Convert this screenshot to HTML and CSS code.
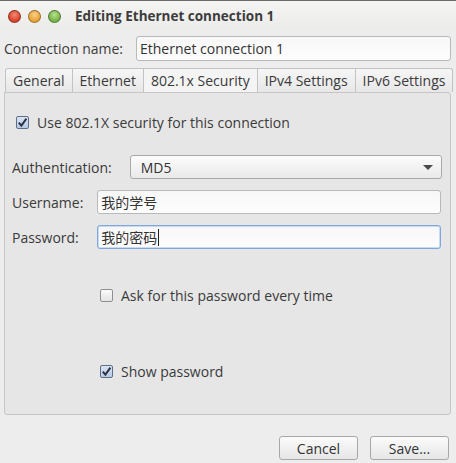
FILE: index.html
```html
<!DOCTYPE html>
<html>
<head>
<meta charset="utf-8">
<link rel="stylesheet" href="styles.css">
</head>
<body>
<div class="window">
  <div class="titlebar">
    <div class="wbtns">
      <span class="wbtn close"></span>
      <span class="wbtn min"></span>
      <span class="wbtn max"></span>
    </div>
    <div class="title">Editing Ethernet connection 1</div>
  </div>
  <div class="content">
    <div class="name-row">
      <span class="lbl">Connection name:</span>
      <div class="entry name-entry">Ethernet connection 1</div>
    </div>
    <div class="notebook">
      <div class="tabs">
        <div class="tab">General</div>
        <div class="tab">Ethernet</div>
        <div class="tab active">802.1x Security</div>
        <div class="tab">IPv4 Settings</div>
        <div class="tab">IPv6 Settings</div>
      </div>
      <div class="page">
        <label class="check use-check"><span class="cb checked"><svg viewBox="0 0 13 13" width="13" height="13"><path d="M2.8 6.6 L5.4 9.6 L10.4 2.6" fill="none" stroke="#2b3340" stroke-width="2"/></svg></span>Use 802.1X security for this connection</label>
        <div class="auth-row">
          <span class="lbl">Authentication:</span>
          <div class="combo"><span>MD5</span><span class="arrow"></span></div>
        </div>
        <div class="form">
          <span class="lbl">Username:</span>
          <div class="entry cjk">我的学号</div>
          <span class="lbl">Password:</span>
          <div class="entry cjk focus">我的密码<span class="caret"></span></div>
        </div>
        <label class="check ask-check"><span class="cb"></span>Ask for this password every time</label>
        <label class="check show-check"><span class="cb checked"><svg viewBox="0 0 13 13" width="13" height="13"><path d="M2.8 6.6 L5.4 9.6 L10.4 2.6" fill="none" stroke="#2b3340" stroke-width="2"/></svg></span>Show password</label>
      </div>
    </div>
    <div class="actions">
      <button class="btn">Cancel</button>
      <button class="btn">Save...</button>
    </div>
  </div>
</div>
</body>
</html>
```
FILE: styles.css
```css
* { box-sizing: border-box; }
html, body { margin: 0; padding: 0; }
body {
  width: 456px;
  height: 463px;
  overflow: hidden;
  background: #ededed;
  font-family: "Open Sans", "Noto Sans CJK SC", sans-serif;
  font-size: 14px;
  color: #3a3a3a;
}
.window { width: 456px; height: 463px; display: flex; flex-direction: column; }
.titlebar {
  height: 31px;
  border-top: 1px solid #6b6a66;
  background: linear-gradient(#f4f4f3, #ebebea);
  display: flex;
  align-items: center;
  padding-left: 8px;
}
.wbtns { display: flex; gap: 7px; }
.wbtn {
  width: 13px; height: 13px; border-radius: 50%;
  border: 1px solid rgba(0,0,0,0.35);
}
.wbtn.close { background: radial-gradient(circle at 50% 35%, #f28a72, #d9402a 70%); }
.wbtn.min { background: radial-gradient(circle at 50% 35%, #fbd08a, #e8a033 70%); }
.wbtn.max { background: radial-gradient(circle at 50% 35%, #b8e08e, #72b244 70%); }
.title {
  margin-left: 14px;
  font-weight: bold;
  font-size: 13.5px;
  color: #3c3c3c;
}
.content { flex: 1; padding: 5px 5px 0 4px; display: flex; flex-direction: column; }
.name-row { display: flex; align-items: center; gap: 13px; height: 25px; }
.entry {
  height: 24px;
  border: 1px solid #b9b9b9;
  border-radius: 3px;
  background: linear-gradient(#f7f7f7, #fdfdfd);
  padding: 0 3px;
  display: flex; align-items: center;
  color: #333;
}
.name-entry { flex: 1; height: 25px; }
.notebook { margin-top: 7px; display: flex; flex-direction: column; }
.tabs { display: flex; padding-left: 1px; height: 24px; }
.tab {
  flex: none;
  white-space: nowrap;
  padding: 0 7px;
  border: 1px solid #c3c3c3;
  border-left: none;
  border-bottom: none;
  background: linear-gradient(#f6f6f6, #e7e7e7);
  display: flex; align-items: center;
  color: #3a3a3a;
}
.tab:first-child { border-left: 1px solid #c3c3c3; border-top-left-radius: 3px; }
.tab:last-child { border-top-right-radius: 3px; }
.tab.active { background: #f4f4f4; }
.page {
  height: 323px;
  border: 1px solid #c6c6c6;
  border-radius: 0 3px 3px 3px;
  background: #e6e6e6;
  padding: 21px 8px 0 7px;
  display: flex; flex-direction: column;
}
.check { display: flex; align-items: center; gap: 8px; }
.cb {
  width: 13px; height: 13px;
  border: 1px solid #8f8f8f;
  border-radius: 2px;
  background: linear-gradient(#fbfbfb, #e3e3e3);
  display: flex; align-items: center; justify-content: center;
  position: relative;
  flex: none;
}
.cb.checked { background: linear-gradient(#dbe5f4, #b7c9e6); border-color: #5e6f8a; }
.cb svg { position: absolute; left: -1px; top: -1px; }
.use-check { margin-left: 4px; height: 16px; }
.auth-row { display: flex; align-items: center; margin-top: 25px; gap: 18px; }
.combo {
  flex: 1; height: 24px;
  border: 1px solid #a9a9a9; border-radius: 3px;
  background: linear-gradient(#fcfcfc, #e9e9e9);
  display: flex; align-items: center; justify-content: space-between;
  padding: 0 8px 0 10px;
  color: #333;
}
.arrow {
  width: 0; height: 0;
  border-left: 5px solid transparent;
  border-right: 5px solid transparent;
  border-top: 5px solid #4a4a4a;
}
.form {
  margin-top: 11px;
  display: grid;
  grid-template-columns: auto 1fr;
  column-gap: 14px;
  row-gap: 11px;
  align-items: center;
  padding-right: 1px;
}
.cjk { font-family: "Noto Sans CJK SC", sans-serif; font-size: 14px; }
.entry.focus { border-color: #7fa7da; box-shadow: inset 0 0 0 1px #c8dbf3; }
.caret { width: 1px; height: 17px; background: #222; margin-left: 1px; }
.ask-check { margin-left: 88px; margin-top: 38px; height: 16px; }
.show-check { margin-left: 88px; margin-top: 60px; height: 16px; }
.actions {
  display: flex; justify-content: flex-end; gap: 12px;
  margin-top: 21px; padding-right: 2px;
}
.btn {
  width: 79px; height: 24px;
  border: 1px solid #a8a8a8; border-radius: 3px;
  background: linear-gradient(#fbfbfb, #e6e6e6);
  font-family: inherit; font-size: 14px; color: #333;
  padding: 0;
}
```
